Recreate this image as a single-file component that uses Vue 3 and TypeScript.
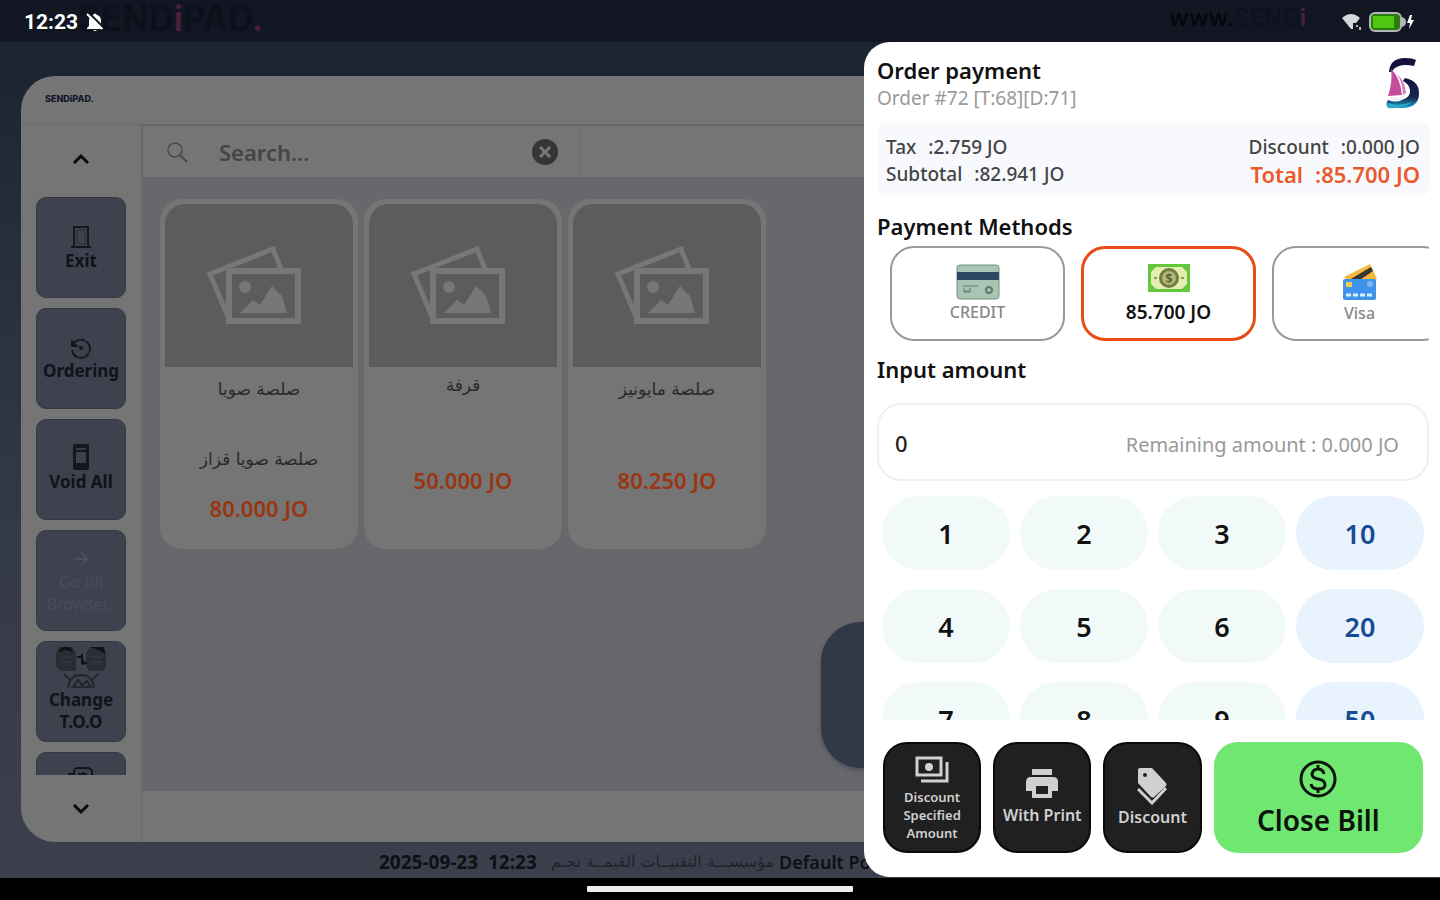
<script setup lang="ts">
import { ref } from 'vue'

interface Product { names: string[]; price: string }
interface Method { id: string; label: string }

const products: Product[] = [
  { names: ['صلصة صويا', 'صلصة صويا قزاز'], price: '80.000 JO' },
  { names: ['قرفة'], price: '50.000 JO' },
  { names: ['صلصة مايونيز'], price: '80.250 JO' },
]
const actions = [
  { id: 'exit', label: 'Exit' },
  { id: 'ordering', label: 'Ordering' },
  { id: 'void', label: 'Void All' },
  { id: 'drawer', label: 'Go till Browser..' },
  { id: 'change', label: 'Change T.O.O' },
  { id: 'cash', label: '' },
]
const methods: Method[] = [
  { id: 'credit', label: 'CREDIT' },
  { id: 'cash', label: '85.700 JO' },
  { id: 'visa', label: 'Visa' },
]
const keys = ['1', '2', '3', '10', '4', '5', '6', '20', '7', '8', '9', '50']
const selected = ref('cash')
const amount = ref('0')
const search = ref('')

function press(key: string) {
  amount.value = amount.value === '0' ? key : amount.value + key
}
</script>

<template>
  <div class="screen">
    <header class="status">
      <div class="brand-left">SEND<i>i</i>PAD<i>.</i></div>
      <div class="brand-right">www.<b>SEND<i>i</i></b></div>
      <div class="clock">
        <span>12:23</span>
        <svg width="18" height="20" viewBox="0 0 18 20" aria-hidden="true">
          <path d="M3 14V9q0-5 4-6 2-3 4 0 4 1 4 6v5l2 2v1H1v-1z M7 18h4q-2 2-4 0z" fill="#fff" />
          <path d="M3 1l15 15" stroke="#101521" stroke-width="2" /><path d="M1 2l15 15" stroke="#fff" stroke-width="2" />
        </svg>
      </div>
      <div class="indicators">
        <svg width="20" height="18" viewBox="0 0 20 18" aria-hidden="true">
          <path d="M0 5q9-8 18 0l-4 5h-3v6H9z" fill="#d5d6da" /><path d="M14 12h2v2h-2zm3 2h2v3h-2z" fill="#bbb" />
        </svg>
        <svg width="46" height="22" viewBox="0 0 46 22" aria-hidden="true">
          <rect x="2" y="2" width="31" height="18" rx="5" fill="#2a7d0c" stroke="#b4b5b8" stroke-width="2" />
          <rect x="5" y="5" width="21" height="12" fill="#52c711" /><path d="M34 6q4 1 4 5t-4 5z" fill="#b4b5b8" />
          <path d="M42 4l-3 8h3l-1 6 5-9h-3l1-5z" fill="#fff" />
        </svg>
      </div>
    </header>

    <main class="workspace">
      <section class="pos">
        <div class="pos-head">SENDiPAD.</div>
        <div class="pos-body">
          <nav class="side">
            <button class="arrow" aria-label="Scroll up"><svg width="20" height="14" viewBox="0 0 20 14"><path d="M3 11l7-7 7 7" /></svg></button>
            <div class="actions">
              <button v-for="a in actions" :key="a.id" class="action" :class="a.id">
                <svg v-if="a.id === 'exit'" width="22" height="26" viewBox="0 0 22 26"><path d="M4 22V3h14v19M1 23h20" fill="none" stroke="#14171d" stroke-width="2" /><path d="M7 6h8v14H7z" fill="none" stroke="#282d36" stroke-width="1" /></svg>
                <svg v-else-if="a.id === 'ordering'" width="24" height="24" viewBox="0 0 24 24"><path d="M5 7a9 9 0 1 1-2 7" fill="none" stroke="#14171d" stroke-width="2" stroke-dasharray="12 1" /><path d="M2 3v8h8z" fill="#14171d" /><circle cx="12" cy="12" r="2" fill="#14171d" /></svg>
                <svg v-else-if="a.id === 'void'" width="20" height="28" viewBox="0 0 20 28"><rect x="2" y="1" width="16" height="26" rx="2" fill="#14171d" /><path d="M5 9h10v11H5z" fill="#3d424e" /><path d="M5 5h10v2H5z" fill="#343944" /></svg>
                <svg v-else-if="a.id === 'drawer'" width="24" height="24" viewBox="0 0 24 24"><path d="M5 12h12M12 5l6 7-6 7" fill="none" stroke="#4a505b" stroke-width="2" /></svg>
                <svg v-else-if="a.id === 'change'" width="54" height="44" viewBox="0 0 54 44">
                  <path d="M4 2h14l4 6v18H7l-5-5V8zM36 2h14l2 8v13l-4 3H35l-3-5V8z" fill="#2a2d34" />
                  <path d="M4 8l4-6h8l3 5-8-2zm32-6h13l3 7-8-4z" fill="#0e1116" />
                  <path d="M7 12h11M7 17h11M37 12h11M37 17h11" stroke="#3b3f48" />
                  <path d="M23 12h5v6h5M28 9v5m1 1v5" fill="none" stroke="#0e1116" stroke-width="2" />
                  <path d="M14 43q2-13 13-13t13 13M10 29l6 6m28-6l-6 6M19 42l5-7 4 5 5-4 4 6z" fill="none" stroke="#22262e" stroke-width="2" />
                </svg>
                <svg v-else width="26" height="24" viewBox="0 0 26 24"><rect x="6" y="3" width="18" height="18" rx="4" fill="none" stroke="#14171d" stroke-width="2" /><path d="M0 9h7M15 7v7M10 9h9" stroke="#14171d" stroke-width="2" /></svg>
                <span v-if="a.label">{{ a.label }}</span>
              </button>
            </div>
            <button class="arrow down" aria-label="Scroll down"><svg width="20" height="14" viewBox="0 0 20 14"><path d="M3 3l7 7 7-7" /></svg></button>
          </nav>
          <div class="catalog">
            <div class="search-row">
              <label class="search">
                <svg width="22" height="22" viewBox="0 0 22 22" aria-hidden="true"><circle cx="9" cy="9" r="7" fill="none" stroke="#4a4a4a" stroke-width="1.5" /><path d="M14 14l7 7" stroke="#4a4a4a" stroke-width="2" /></svg>
                <input v-model="search" type="text" placeholder="Search..." aria-label="Search">
                <button class="clear" aria-label="Clear search" @click="search = ''">
                  <svg width="26" height="26" viewBox="0 0 26 26"><circle cx="13" cy="13" r="13" fill="#353535" /><path d="M8 8l10 10M18 8L8 18" stroke="#777" stroke-width="3" /></svg>
                </button>
              </label>
            </div>
            <div class="products">
              <article v-for="p in products" :key="p.price" class="product" :class="{ single: p.names[0].length < 6 }">
                <div class="thumb">
                  <svg width="104" height="86" viewBox="0 0 104 86" aria-hidden="true">
                    <path d="M22 76L3 31 66 6l8 20" fill="none" stroke="#777" stroke-width="5" />
                    <rect x="22" y="28" width="69" height="50" fill="#5c5c5c" stroke="#777" stroke-width="6" />
                    <circle cx="38" cy="44" r="6" fill="#777" /><path d="M33 70l13-13 7 5 12-19 10 10 5 17z" fill="#777" />
                  </svg>
                </div>
                <div class="names" dir="rtl"><p v-for="n in p.names" :key="n">{{ n }}</p></div>
                <strong>{{ p.price }}</strong>
              </article>
            </div>
            <div class="pos-foot"></div>
          </div>
        </div>
      </section>
      <footer class="info"><time>2025-09-23&nbsp; 12:23</time><span dir="rtl">مؤسســـة التقنيــات القيمــة نجـم</span><b>Default Point</b></footer>
      <button class="fab" aria-label="Open cart"></button>
    </main>

    <aside class="panel">
      <header class="panel-head">
        <div><h1>Order payment</h1><p>Order #72 [T:68][D:71]</p></div>
        <svg width="36" height="52" viewBox="0 0 36 52" aria-label="Sendipad" role="img">
          <defs><linearGradient id="hull" x1="0" y1="0" x2="0" y2="1"><stop offset="0" stop-color="#15103f" /><stop offset=".65" stop-color="#172650" /><stop offset="1" stop-color="#1aa5c7" /></linearGradient></defs>
          <path d="M4 15Q5 1 20 1q8 0 11 2l-2 6q-9-2-15 0-6 2-7 6z" fill="#15133e" />
          <path d="M20 21q14 3 14 15 0 15-17 15H3q-3-4 0-8 8 3 14 0 9-3 8-10-1-6-7-9z" fill="url(#hull)" />
          <path d="M6 12q9 8 11 26L3 39q5-15 3-27z" fill="#c54d9c" /><path d="M12 17q8 7 9 19l-3 2q0-12-6-21z" fill="#d979b4" />
          <path d="M4 40q10 3 17-2l-5 5H8z" fill="#e8f0f5" /><path d="M2 46q12 4 25-1-9 7-24 6z" fill="#28adc9" />
        </svg>
      </header>
      <dl class="summary">
        <div><dt>Tax</dt><dd>:2.759 JO</dd></div>
        <div><dt>Discount</dt><dd>:0.000 JO</dd></div>
        <div><dt>Subtotal</dt><dd>:82.941 JO</dd></div>
        <div class="total"><dt>Total</dt><dd>:85.700 JO</dd></div>
      </dl>
      <h2>Payment Methods</h2>
      <div class="methods">
        <button v-for="m in methods" :key="m.id" class="method" :class="{ active: selected === m.id }" @click="selected = m.id">
          <svg v-if="m.id === 'credit'" width="44" height="36" viewBox="0 0 44 36"><rect x="1" y="1" width="42" height="34" rx="3" fill="#a9c5b4" stroke="#758d82" /><path d="M1 8h42v8H1z" fill="#2c4663" /><path d="M7 22h15M8 27h6m-6-3v4h6v-4" fill="none" stroke="#5c7a6e" /><circle cx="33" cy="26" r="3" fill="none" stroke="#5c7a6e" stroke-width="2" /></svg>
          <svg v-else-if="m.id === 'cash'" width="42" height="28" viewBox="0 0 42 28"><rect width="42" height="28" fill="#63c63b" /><path d="M8 3h26l5 5v12l-5 5H8l-5-5V8z" fill="#e5edb0" /><circle cx="21" cy="14" r="10" fill="#6f7e3f" /><circle cx="21" cy="14" r="7" fill="#b5b77c" /><text x="21" y="19" text-anchor="middle" font-size="13" font-weight="700" fill="#5a6a2e">$</text><path d="M6 14h3m24 0h3" stroke="#78a548" stroke-width="2" /></svg>
          <svg v-else width="36" height="38" viewBox="0 0 36 38"><path d="M2 14L28 1l7 15-20 12z" fill="#f5b93f" /><path d="M7 17L29 4l2 4-19 13z" fill="#3a352c" /><rect x="1" y="16" width="33" height="21" rx="2" fill="#3f93ea" /><path d="M4 19h6v5H4z" fill="#f4cb55" /><path d="M4 32h27" stroke="#d9efff" stroke-width="3" stroke-dasharray="5 2" /><circle cx="28" cy="21" r="3" fill="#7fb9f2" /></svg>
          <span>{{ m.label }}</span>
        </button>
      </div>
      <h2><label for="amount">Input amount</label></h2>
      <div class="amount"><input id="amount" v-model="amount" type="text"><span>Remaining amount : 0.000 JO</span></div>
      <div class="keys">
        <button v-for="(k, i) in keys" :key="k" :class="{ quick: i % 4 === 3 }" @click="press(k)">{{ k }}</button>
      </div>
      <footer class="pay-actions">
        <button class="small">
          <svg width="34" height="28" viewBox="0 0 34 28"><path d="M2 2h24v17H2zM32 6v19H6" fill="none" stroke="#d0d0d0" stroke-width="3" /><circle cx="14" cy="11" r="4" fill="#d0d0d0" /></svg>
          <span>Discount Specified Amount</span>
        </button>
        <button>
          <svg width="32" height="30" viewBox="0 0 32 30"><path d="M6 0h20v6H6zM5 8h22q5 0 5 5v9h-6v7H6v-7H0v-9q0-5 5-5z" fill="#d0d0d0" /><path d="M10 17h12v8H10z" fill="#202020" /></svg>
          <span>With Print</span>
        </button>
        <button class="tag">
          <svg width="30" height="38" viewBox="0 0 30 38"><path d="M1 3q0-2 2-2h12l14 15q1 2 0 3L17 30q-1 1-3 0L1 16z" fill="#d0d0d0" /><path d="M1 22l14 14 14-15" fill="none" stroke="#d0d0d0" stroke-width="3" /><circle cx="8" cy="8" r="2" fill="#202020" /></svg>
          <span>Discount</span>
        </button>
        <button class="close">
          <svg width="38" height="38" viewBox="0 0 38 38"><circle cx="19" cy="19" r="17" fill="none" stroke="#0c140c" stroke-width="3" /><path d="M25 14q-1-5-6-5t-6 5q0 4 6 5 7 1 7 6 0 4-7 4-6 0-7-5M19 5v5m0 18v5" fill="none" stroke="#0c140c" stroke-width="3" /></svg>
          <span>Close Bill</span>
        </button>
      </footer>
    </aside>
    <div class="home"><span></span></div>
  </div>
</template>

<style>
html, body { margin: 0; height: 100%; background: #000; }
#app { height: 100%; }
</style>

<style scoped>
* { box-sizing: border-box; }
.screen { position: relative; min-height: 100vh; display: flex; flex-direction: column; overflow: hidden; font-family: "Noto Sans", "Open Sans", "DejaVu Sans", sans-serif; background: linear-gradient(180deg, #1b2231 0, #1e2636 100px, #292f3e 280px, #343a46 550px, #3b404c 100%); }
button { font: inherit; border: 0; padding: 0; margin: 0; background: none; cursor: pointer; }
h1, h2, p, dl, dd { margin: 0; }
svg { flex: none; }
.status { position: relative; height: 42px; background: #111622; display: flex; justify-content: space-between; align-items: center; padding: 2px 26px 0 24px; }
.clock { display: flex; align-items: center; gap: 8px; color: #fff; font: 700 21px/28px Roboto, sans-serif; z-index: 1; }
.indicators { display: flex; align-items: center; gap: 6px; z-index: 1; }
.brand-left, .brand-right { position: absolute; top: 0; color: #0b101b; font: 600 35px/36px Inter, sans-serif; }
.brand-left { left: 78px; }
.brand-right { right: 134px; font-size: 24px; color: #05070c; font-weight: 500; }
.brand-right b { color: #0c1220; font-weight: 600; }
.brand-left i, .brand-right i { font-style: normal; color: #4e1e3e; }
.workspace { position: relative; flex: 1; display: flex; flex-direction: column; padding-top: 34px; }
.pos { flex: 1; margin: 0 21px; border-radius: 34px; background: #757575; overflow: hidden; display: flex; flex-direction: column; }
.pos-head { height: 49px; padding: 14px 24px; border-bottom: 1px solid #6a6a6a; color: #11142a; font: 800 9px/18px Inter, sans-serif; }
.pos-body { flex: 1; display: flex; }
.side { width: 121px; display: flex; flex-direction: column; align-items: center; border-right: 1px solid #6c6c6c; }
.arrow { height: 72px; width: 100%; padding-bottom: 4px; display: grid; place-items: center; }
.arrow.down { height: 67px; padding: 0; }
.arrow path { fill: none; stroke: #0b0b0b; stroke-width: 3; }
.actions { flex: 1 1 0; min-height: 0; overflow: hidden; display: flex; flex-direction: column; gap: 10px; }
.action { width: 90px; height: 101px; flex: none; border-radius: 10px; background: #3d424e; border: 1px solid #343943; color: #101319; font-size: 17px; font-weight: 700; line-height: 22px; display: flex; flex-direction: column; align-items: center; justify-content: center; }
.action.void { padding-bottom: 4px; }
.action.drawer { color: #474c57; font-size: 16px; padding: 0 8px; font-weight: 500; }
.action.change { padding: 0 8px 6px; }
.action.cash { justify-content: flex-start; padding-top: 12px; }
.catalog { flex: 1; min-width: 0; display: flex; flex-direction: column; }
.search-row { height: 53px; border: solid #656565; border-width: 1px 0 1px 1px; }
.search { display: flex; align-items: center; width: 438px; height: 51px; padding: 0 22px 0 23px; border-right: 1px solid #6c6c6c; }
.search input { flex: 1; min-width: 0; margin-left: 31px; padding: 0; border: 0; outline: 0; background: none; font: 600 22px/28px "Noto Sans", sans-serif; color: #3c3c3c; }
.search input::placeholder { color: #454545; opacity: 1; }
.clear { display: grid; }
.products { flex: 1; background: #68676c; padding: 21px 18px; display: grid; grid-template-columns: repeat(auto-fill, 198px); grid-auto-rows: 350px; gap: 6px; }
.product { border-radius: 22px; background: #757575; padding: 5px 5px 24px; display: flex; flex-direction: column; align-items: center; }
.thumb { width: 100%; height: 163px; display: grid; place-items: center; background: #5c5c5c; border-radius: 20px 20px 0 0; }
.names { display: flex; flex-direction: column; gap: 42px; padding-top: 8px; color: #292929; font: 500 17px/28px "DejaVu Sans", sans-serif; text-align: center; }
.product strong { margin-top: 20px; color: #9a3512; font-size: 22px; line-height: 30px; font-weight: 600; }
.product:not(:first-child) strong { margin-top: 62px; }
.product.single .names { padding-top: 4px; }
.product.single strong { margin-top: 66px; }
.pos-foot { height: 51px; }
.info { height: 36px; display: flex; align-items: center; padding: 3px 0 0 379px; color: #0d1016; font-size: 19px; font-weight: 700; white-space: nowrap; }
.info span { margin: 0 5px 0 14px; font: 16px/24px "DejaVu Sans", sans-serif; color: #1f232b; }
.info b { font-size: 18px; font-weight: 600; }
.fab { position: absolute; left: 57%; bottom: 110px; width: 146px; height: 146px; border-radius: 40px; background: #303846; box-shadow: 0 2px 5px #4a4c55; }
.panel { position: absolute; top: 42px; right: 0; bottom: 23px; width: 40%; padding: 12px 11px 24px 13px; background: #fff; border-radius: 26px 0 0 26px; display: flex; flex-direction: column; color: #111; }
.panel-head { height: 69px; display: flex; justify-content: space-between; padding-right: 8px; }
.panel-head svg { margin-top: 3px; }
h1, h2 { font-size: 22px; line-height: 32px; font-weight: 600; }
.panel-head p { font-size: 19px; line-height: 24px; color: #999; }
.summary { height: 73px; padding: 12px 9px 10px; background: #f8f9fd; border-radius: 8px; display: grid; grid-template-columns: auto auto; justify-content: space-between; align-content: center; font-size: 19px; line-height: 27px; font-weight: 500; color: #444; }
.summary div { display: flex; gap: 12px; font-size: 19px; }
.summary div:nth-child(even) { justify-content: flex-end; }
.summary .total { color: #ea5a2d; font-size: 22px; font-weight: 600; }
h2 { margin-top: 14px; }
.methods { display: flex; gap: 16px; margin: 4px 0 0; padding-left: 13px; overflow: hidden; flex: none; }
.method { flex: 0 0 175px; height: 95px; border: 2px solid #999; border-radius: 24px; display: flex; flex-direction: column; align-items: center; justify-content: center; color: #888; font-size: 16px; line-height: 24px; font-weight: 500; }
.method.active { border: 3px solid #e94d16; color: #111; font-size: 19px; font-weight: 600; gap: 8px; }
.methods + h2 { margin-top: 12px; }
.amount { flex: none; height: 78px; margin-top: 18px; border: 2px solid #f0f0f0; border-radius: 24px; padding: 2px 28px 0 16px; display: flex; align-items: center; }
.amount input { flex: 1; min-width: 0; padding: 0; border: 0; outline: 0; background: none; font: 500 22px/30px "Noto Sans", sans-serif; color: #222; }
.amount span { padding-top: 4px; font-size: 20px; line-height: 28px; color: #999; }
.keys { flex: 1 1 0; min-height: 0; overflow: hidden; margin-top: 15px; padding: 0 5px; display: grid; grid-template-columns: repeat(4, 1fr); grid-auto-rows: 74px; gap: 19px 10px; }
.keys button { border-radius: 37px; background: #f2faf9; color: #111; font-size: 27px; font-weight: 600; }
.keys .quick { background: #e8f3fe; color: #174b94; }
.pay-actions { flex: none; height: 111px; margin: 22px 6px 0; display: grid; grid-template-columns: 98fr 98fr 98fr 209fr; gap: 12px; }
.pay-actions button { min-width: 0; border-radius: 24px; border: 2px solid #0a0a0a; background: #202020; color: #d0d0d0; font-size: 16px; line-height: 24px; font-weight: 600; display: flex; flex-direction: column; align-items: center; justify-content: center; gap: 4px; white-space: nowrap; }
.pay-actions .tag { gap: 0; }
.pay-actions .small { font-size: 13px; line-height: 18px; padding: 2px 12px 0; white-space: normal; gap: 4px; }
.pay-actions .close { border: 0; background: #70e771; color: #0c140c; font-size: 28px; line-height: 36px; padding-top: 2px; gap: 4px; }
.home { height: 22px; background: #000; display: grid; place-items: center; }
.home span { width: 266px; height: 6px; background: #eee; border-radius: 1px; }
</style>
